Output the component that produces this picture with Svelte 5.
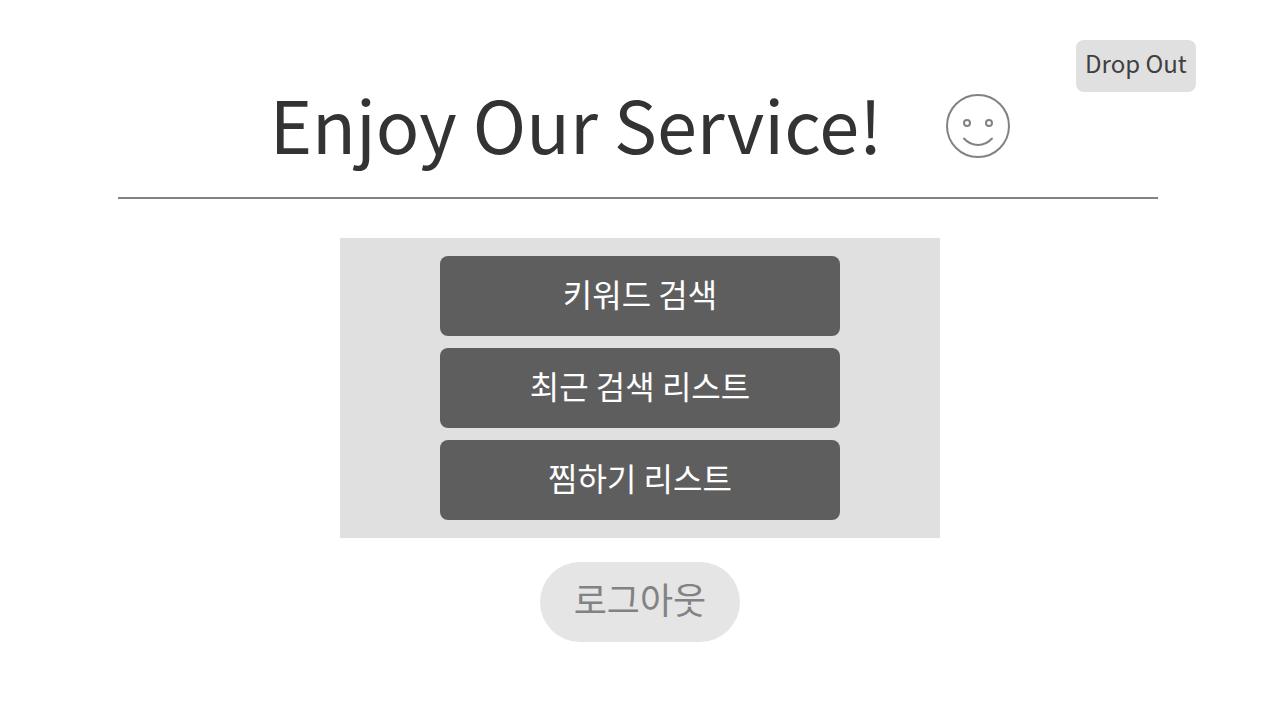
<script>
  const actions = ['키워드 검색', '최근 검색 리스트', '찜하기 리스트'];
</script>

<div class="page">
  <header>
    <div class="top">
      <button class="drop">Drop Out</button>
    </div>
    <div class="title">
      <h1>Enjoy Our Service!</h1>
      <svg width="64" height="64" viewBox="0 0 64 64" fill="none" stroke="#828282" stroke-width="2" stroke-linecap="round" aria-hidden="true">
        <circle cx="32" cy="32" r="31" />
        <circle cx="21" cy="29" r="3" />
        <circle cx="43" cy="29" r="3" />
        <path d="M18 44.5C25.5 53 38.5 53 46 44.5" />
      </svg>
    </div>
    <hr />
  </header>
  <main>
    <nav>
      {#each actions as action}
        <button class="action">{action}</button>
      {/each}
    </nav>
    <button class="logout">로그아웃</button>
  </main>
</div>

<style>
  :global(body) {
    margin: 0;
    background: #fff;
  }

  .page,
  button {
    font-family: "Noto Sans CJK KR", sans-serif;
  }

  .page {
    box-sizing: border-box;
    padding: 40px 84px;
  }

  button {
    box-sizing: border-box;
    padding: 0 0 8px;
    border: 0;
    cursor: pointer;
  }

  .top {
    display: flex;
    justify-content: flex-end;
  }

  .drop {
    width: 120px;
    height: 52px;
    border-radius: 8px;
    background: #e0e0e0;
    color: #404040;
    font-size: 24px;
  }

  .title {
    display: flex;
    align-items: center;
    justify-content: center;
    gap: 64px;
    margin-top: 2px;
  }

  h1 {
    margin: 0;
    padding-bottom: 6px;
    color: #333;
    font-size: 72px;
    font-weight: 400;
    line-height: 58px;
    white-space: nowrap;
  }

  svg {
    flex: none;
  }

  hr {
    height: 2px;
    margin: 39px 38px 39px 34px;
    border: 0;
    background: #828282;
  }

  main {
    display: flex;
    flex-direction: column;
    align-items: center;
    gap: 24px;
  }

  nav {
    display: flex;
    box-sizing: border-box;
    flex-direction: column;
    gap: 12px;
    width: 100%;
    max-width: 600px;
    padding: 18px 100px;
    background: #e0e0e0;
  }

  .action {
    height: 80px;
    padding-bottom: 6px;
    border-radius: 8px;
    background: #5e5e5e;
    color: #fff;
    font-size: 32px;
  }

  .logout {
    width: 200px;
    height: 80px;
    border-radius: 40px;
    background: #e5e5e5;
    color: #828282;
    font-size: 36px;
  }
</style>
